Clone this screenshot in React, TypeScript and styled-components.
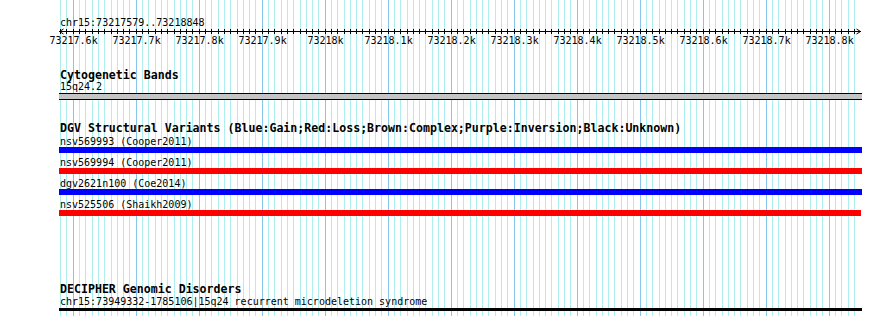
import React from "react";
import styled, { createGlobalStyle } from "styled-components";

const START = 73217579;
const END = 73218848;
const LEFT = 60;
const PX = 800 / (END - START + 1);
const toX = (p: number) => Math.floor(LEFT + (p - START) * PX);

const positions: number[] = [];
for (let p = Math.ceil(START / 10) * 10; p <= END; p += 10) positions.push(p);
const majors = positions.filter((p) => p % 100 === 0);

const fmt = (p: number) => {
  const k = p / 1000;
  return `${Number.isInteger(k) ? k : k.toFixed(1)}k`;
};

const Global = createGlobalStyle`
  html, body { margin: 0; padding: 0; background: #fff; }
  body { font-family: "DejaVu Sans Mono", "Liberation Mono", monospace; }
`;

const Page = styled.div`
  position: relative;
  width: 890px;
  height: 316px;
  overflow: hidden;
  background: #ffffff;
  color: #000;
  font-family: "DejaVu Sans Mono", "Liberation Mono", monospace;
`;

const GridSvg = styled.svg`
  position: absolute;
  left: 0;
  top: 0;
  z-index: 0;
`;

const Content = styled.div`
  position: relative;
  z-index: 1;
  display: flex;
  flex-direction: column;
`;

const SmallText = styled.div<{ $mt?: number }>`
  font-size: 10px;
  line-height: 11px;
  height: 11px;
  padding-left: 60px;
  margin-top: ${(p) => p.$mt ?? 0}px;
  white-space: pre;
`;

const Ruler = styled.section`
  margin-top: 17px;
  display: flex;
  flex-direction: column;
`;

const AxisSvg = styled.svg`
  display: block;
`;

const TickRow = styled.div`
  position: relative;
  height: 11px;
`;

const TickLabel = styled.span`
  position: absolute;
  top: 0;
  font-size: 10px;
  line-height: 11px;
  white-space: pre;
  text-align: center;
`;

const Track = styled.section<{ $mt: number }>`
  margin-top: ${(p) => p.$mt}px;
  display: flex;
  flex-direction: column;
`;

const TrackTitle = styled.h2`
  margin: 0;
  padding-left: 60px;
  font-size: 11.6px;
  line-height: 12px;
  height: 12px;
  font-weight: bold;
  white-space: pre;
`;

const Band = styled.div`
  margin: 1px 0 0 59px;
  width: 803px;
  height: 7px;
  box-sizing: border-box;
  background: #c4c4c4;
  border-top: 1px solid #000;
  border-bottom: 1px solid #000;
`;

const FeatureList = styled.div`
  padding-top: 2px;
  display: flex;
  flex-direction: column;
  gap: 4px;
`;

const Feature = styled.div`
  display: flex;
  flex-direction: column;
`;

const FeatureBar = styled.div<{ $color: string; $h: number; $w: number; $mt?: number }>`
  margin-left: 59px;
  margin-top: ${(p) => p.$mt ?? 0}px;
  width: ${(p) => p.$w}px;
  height: ${(p) => p.$h}px;
  background: ${(p) => p.$color};
`;

const variants = [
  { label: "nsv569993 (Cooper2011)", color: "#0000ff", w: 803 },
  { label: "nsv569994 (Cooper2011)", color: "#ff0000", w: 803 },
  { label: "dgv2621n100 (Coe2014)", color: "#0000ff", w: 803 },
  { label: "nsv525506 (Shaikh2009)", color: "#ff0000", w: 802 },
];

function Grid() {
  return (
    <GridSvg width={890} height={316} viewBox="0 0 890 316">
      {positions.map((p) => {
        const x = toX(p) + 0.5;
        const major = p % 100 === 0;
        return (
          <line
            key={p}
            x1={x}
            x2={x}
            y1={0}
            y2={316}
            stroke={major ? "#87c6ec" : "#afeeee"}
            strokeWidth={1}
            shapeRendering="crispEdges"
          />
        );
      })}
    </GridSvg>
  );
}

function Axis() {
  return (
    <AxisSvg width={890} height={7} viewBox="0 0 890 7">
      <line x1={59} x2={861} y1={3.5} y2={3.5} stroke="#000" strokeWidth={1} shapeRendering="crispEdges" />
      {positions.map((p) => {
        const x = toX(p) + 0.5;
        return (
          <line key={p} x1={x} x2={x} y1={1} y2={6} stroke="#000" strokeWidth={1} shapeRendering="crispEdges" />
        );
      })}
      <polyline points="63.5,1 59.5,3.5 63.5,6" fill="none" stroke="#000" strokeWidth={1} />
      <polyline points="856.5,1 860.5,3.5 856.5,6" fill="none" stroke="#000" strokeWidth={1} />
    </AxisSvg>
  );
}

export default function App() {
  return (
    <>
      <Global />
      <Page>
        <Grid />
        <Content>
          <Ruler>
            <SmallText>chr15:73217579..73218848</SmallText>
            <Axis />
            <TickRow>
              {majors.map((p) => {
                const label = fmt(p);
                const w = label.length * 6;
                return (
                  <TickLabel key={p} style={{ left: toX(p) - w / 2 + 0.5, width: w }}>
                    {label}
                  </TickLabel>
                );
              })}
            </TickRow>
          </Ruler>

          <Track $mt={23}>
            <TrackTitle>Cytogenetic Bands</TrackTitle>
            <SmallText>15q24.2</SmallText>
            <Band />
          </Track>

          <Track $mt={22}>
            <TrackTitle>
              DGV Structural Variants (Blue:Gain;Red:Loss;Brown:Complex;Purple:Inversion;Black:Unknown)
            </TrackTitle>
            <FeatureList>
              {variants.map((v) => (
                <Feature key={v.label}>
                  <SmallText>{v.label}</SmallText>
                  <FeatureBar $color={v.color} $h={6} $w={v.w} />
                </Feature>
              ))}
            </FeatureList>
          </Track>

          <Track $mt={67}>
            <TrackTitle>DECIPHER Genomic Disorders</TrackTitle>
            <SmallText $mt={1}>chr15:73949332-1785106|15q24 recurrent microdeletion syndrome</SmallText>
            <FeatureBar $color="#000" $h={3} $w={803} $mt={1} />
          </Track>
        </Content>
      </Page>
    </>
  );
}
